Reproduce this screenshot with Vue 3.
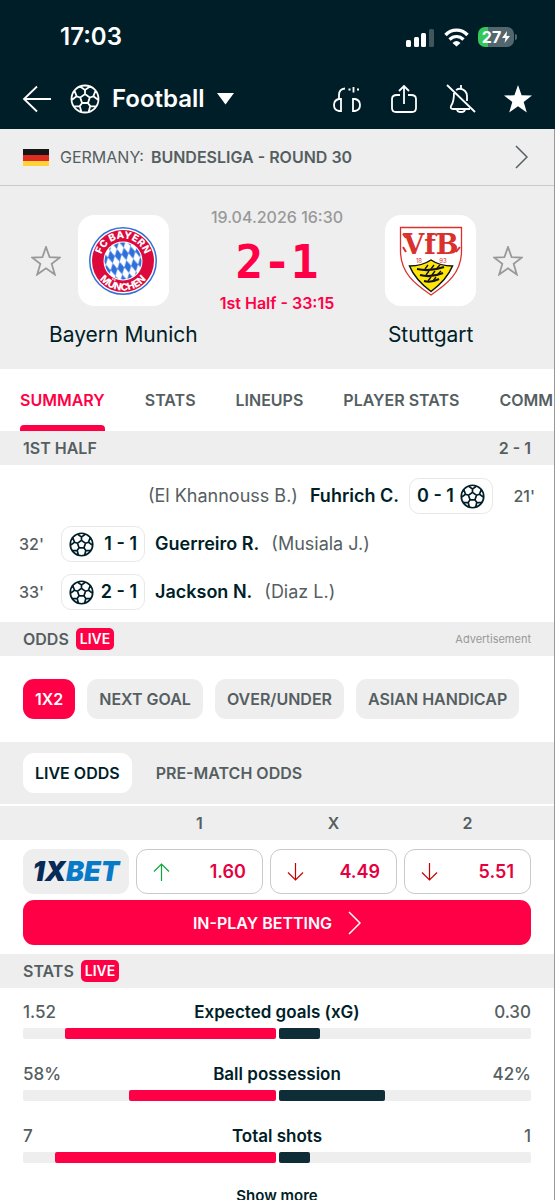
<template>
  <div class="screen">
    <header class="top">
      <div class="status-bar">
        <time class="clock">17:03</time>
        <div class="indicators">
          <svg class="signal" viewBox="0 0 29 19" fill="#fff">
            <rect x="0" y="12" width="5" height="7" rx="1.5" />
            <rect x="8" y="9" width="5" height="10" rx="1.5" />
            <rect x="15" y="5" width="5" height="14" rx="1.5" />
            <rect x="23" y="1" width="5" height="18" rx="1.5" fill="#40555c" />
          </svg>
          <svg class="wifi" viewBox="0 0 25 19" fill="none" stroke="#fff">
            <path d="M1.5 7 C7.5 .5 17.5 .5 23.5 7" stroke-width="3.4" />
            <path d="M5.5 11.5 C9.5 7.5 15.5 7.5 19.5 11.5" stroke-width="3.2" />
            <path d="M8.5 15 Q12.5 11 16.5 15 L12.5 18.5 Z" fill="#fff" stroke="none" />
          </svg>
          <div class="battery">
            <span>27</span>
            <svg viewBox="0 0 8 12" fill="#fff"><path d="M5 0 L0 7 H3.5 L2.5 12 L8 5 H4.5 Z" /></svg>
          </div>
        </div>
      </div>
      <nav class="nav-bar">
        <button type="button" class="icon-button back" aria-label="Back">
          <svg viewBox="0 0 30 28" fill="none" stroke="#fff" stroke-width="1.8">
            <path d="M29 14 H2 M15 1.5 L2 14 L15 26.5" />
          </svg>
        </button>
        <button type="button" class="sport">
          <svg class="ball" viewBox="0 0 30 30"><path :d="ballPath" /></svg>
          <span>Football</span>
          <svg class="caret" viewBox="0 0 17 12" fill="#fff"><path d="M0 0 H17 L8.5 11.5 Z" /></svg>
        </button>
        <div class="tools">
          <button type="button" class="icon-button" aria-label="Audio">
            <svg viewBox="0 0 30 30" fill="none" stroke="#fff" stroke-width="1.8">
              <path d="M9 15 H7 Q2 16 2 21 Q2 26 7 27 H9 Z M21 15 H23 Q28 16 28 21 Q28 26 23 27 H21 Z" />
              <path d="M7 15 V11 Q7 5 13 4.500" />
              <path d="M16.500 5.500 h2 M21.500 3 V8.500 M25 5.500 h2" />
            </svg>
          </button>
          <button type="button" class="icon-button" aria-label="Share">
            <svg viewBox="0 0 30 30" fill="none" stroke="#fff" stroke-width="1.8">
              <path d="M11 11 H8 Q3 11 3 15 V24 Q3 28 7 28 H23 Q27 28 27 24 V15 Q27 11 22 11 H19" />
              <path d="M15 20 V2 M10 7 L15 2 L20 7" />
            </svg>
          </button>
          <button type="button" class="icon-button" aria-label="Notifications off">
            <svg viewBox="0 0 30 30" fill="none" stroke="#fff" stroke-width="1.8">
              <path d="M1 1 L29 28 M15 1 V5" />
              <path d="M10 6 Q15 3 19 7 Q21 9 21 12 V17 M8 9 Q8 18 5 22 Q4 25 7 25 H24 M11 25 Q11 28 15 28 Q19 28 19 25" />
            </svg>
          </button>
          <button type="button" class="icon-button" aria-label="Favourite">
            <svg viewBox="0 0 30 30" fill="#fff"><path :d="starPath" /></svg>
          </button>
        </div>
      </nav>
    </header>

    <main class="content">
      <a href="#" class="league">
        <svg class="flag" viewBox="0 0 26 17">
          <path fill="#151515" d="M0 0h26v6H0z" />
          <path fill="#dd2c20" d="M0 6h26v6H0z" />
          <path fill="#ffd13b" d="M0 12h26v5H0z" />
        </svg>
        <span>GERMANY:</span>
        <b>BUNDESLIGA - ROUND 30</b>
        <svg class="chevron" viewBox="0 0 13 24"><path d="M1 1 L12 12 L1 23" /></svg>
      </a>

      <section class="match">
        <div class="team">
          <button type="button" class="star" aria-label="Follow Bayern Munich">
            <svg viewBox="0 0 30 30"><path :d="starPath" /></svg>
          </button>
          <div class="crest">
            <svg viewBox="0 0 70 70">
              <defs>
                <pattern id="lozenge" width="7" height="13" patternUnits="userSpaceOnUse" patternTransform="translate(35 35) rotate(-12)">
                  <path d="M3.5 0 L7 6.5 L3.5 13 L0 6.5 Z" fill="#2d70dc" />
                </pattern>
                <path id="arc-top" d="M12.5 35 A22.5 22.5 0 0 1 57.5 35" />
                <path id="arc-bottom" d="M5.5 35 A29.5 29.5 0 0 0 64.5 35" />
              </defs>
              <circle cx="35" cy="35" r="34" fill="#2f70d8" />
              <circle cx="35" cy="35" r="32.5" fill="#fff" />
              <circle cx="35" cy="35" r="31" fill="#dc0a3c" />
              <circle cx="35" cy="35" r="19.5" fill="#fff" />
              <circle cx="35" cy="35" r="18.5" fill="url(#lozenge)" />
              <g class="crest-text">
                <text><textPath href="#arc-top" startOffset="50%">FC BAYERN</textPath></text>
                <text><textPath href="#arc-bottom" startOffset="50%">MÜNCHEN</textPath></text>
              </g>
            </svg>
          </div>
          <span class="team-name">Bayern Munich</span>
        </div>

        <div class="result">
          <time>19.04.2026 16:30</time>
          <strong class="score">2-1</strong>
          <span class="period">1st Half - 33:15</span>
        </div>

        <div class="team away">
          <div class="crest">
            <svg viewBox="0 0 70 70">
              <path d="M4.5 1.5 H65.5 V25 C65.5 47 51 58 35 69 C19 58 4.500 47 4.500 25 Z" fill="#fff" stroke="#d9312b" stroke-width="1.3" />
              <text x="35" y="28" class="vfb">VfB</text>
              <path d="M10 26 l-3 -5 M10 12 l-3 -4 M60 26 l4 -5 M31 8 h7" stroke="#d9312b" stroke-width="2" />
              <text x="23" y="37" class="year">18</text>
              <text x="47" y="37" class="year">93</text>
              <path d="M13.5 40 Q26 40 35 34 Q44 40 56.5 40 C52 51 45 58 35 65.5 C25 58 18 51 13.5 40 Z" fill="#ffe60a" stroke="#111" stroke-width="1.5" />
              <g fill="none" stroke="#111" stroke-width="2">
                <path d="M21 43 Q34 46 48 41 M24 49 Q35 52 47 47 M28 55 Q35 57 43 53" />
                <path d="M29 43 l3 -4 M35 43 l3 -4 M41 42 l3 -3 M30 49 l3 -4 M36 49 l3 -4 M42 48 l3 -3 M32 55 l3 -4 M37 55 l3 -4" stroke-width="1.4" />
              </g>
            </svg>
          </div>
          <button type="button" class="star" aria-label="Follow Stuttgart">
            <svg viewBox="0 0 30 30"><path :d="starPath" /></svg>
          </button>
          <span class="team-name">Stuttgart</span>
        </div>
      </section>

      <nav class="tabs">
        <a v-for="tab in tabs" :key="tab" href="#" :class="{ active: tab === activeTab }" @click.prevent="activeTab = tab">{{ tab }}</a>
      </nav>

      <h2 class="section-head">
        <span>1ST HALF</span>
        <span class="push">2 - 1</span>
      </h2>
      <ul class="incidents">
        <li v-for="goal in goals" :key="goal.minute" :class="{ away: goal.away }">
          <span class="minute">{{ goal.minute }}'</span>
          <span class="goal">
            <svg class="ball" viewBox="0 0 30 30"><path :d="ballPath" /></svg>
            <span>{{ goal.score }}</span>
          </span>
          <b>{{ goal.player }}</b>
          <span class="assist">({{ goal.assist }})</span>
        </li>
      </ul>

      <h2 class="section-head">
        <span>ODDS</span>
        <span class="live">LIVE</span>
        <small class="push">Advertisement</small>
      </h2>
      <div class="markets">
        <button
          v-for="market in markets"
          :key="market"
          type="button"
          :class="{ active: market === activeMarket }"
          @click="activeMarket = market"
        >
          {{ market }}
        </button>
      </div>
      <div class="odds-tabs">
        <button
          v-for="name in oddsTabs"
          :key="name"
          type="button"
          :class="{ active: name === activeOdds }"
          @click="activeOdds = name"
        >
          {{ name }}
        </button>
      </div>
      <div class="odds-grid odds-head">
        <span></span>
        <span v-for="odd in odds" :key="odd.label">{{ odd.label }}</span>
      </div>
      <div class="odds-grid odds-row">
        <a href="#" class="bookmaker"><span>1X</span>BET</a>
        <button v-for="odd in odds" :key="odd.label" type="button" class="odd">
          <svg :class="odd.trend" viewBox="0 0 17 18"><path d="M8.5 18 V1 M1 8.5 L8.5 1 L16 8.5" /></svg>
          <span>{{ odd.value }}</span>
        </button>
      </div>
      <div class="bet-wrap">
        <button type="button" class="bet">
          <span>IN-PLAY BETTING</span>
          <svg class="chevron" viewBox="0 0 13 24"><path d="M1 1 L12 12 L1 23" /></svg>
        </button>
      </div>

      <h2 class="section-head">
        <span>STATS</span>
        <span class="live">LIVE</span>
      </h2>
      <div class="stats">
        <div v-for="stat in stats" :key="stat.name" class="stat">
          <div class="stat-text">
            <span>{{ stat.home }}</span>
            <b>{{ stat.name }}</b>
            <span>{{ stat.away }}</span>
          </div>
          <div class="bars">
            <div class="bar home"><i :style="{ width: stat.share + '%' }"></i></div>
            <div class="bar"><i :style="{ width: 100 - stat.share + '%' }"></i></div>
          </div>
        </div>
        <button type="button" class="more">Show more</button>
      </div>
    </main>
  </div>
</template>

<script setup>
import { ref } from 'vue';

const ballPath =
  'M15 1.5 A13.5 13.5 0 1 1 15 28.5 A13.5 13.5 0 1 1 15 1.5 Z ' +
  'M15 10 L19.8 13.5 L17.9 19 H12.1 L10.2 13.5 Z ' +
  'M15 10 V6 M19.8 13.5 L23.4 12.3 M17.9 19 L20.2 22.1 M12.1 19 L9.8 22.1 M10.2 13.5 L6.6 12.3 ' +
  'M10 2.5 L15 6 L20 2.5 M25.5 6.8 L23.4 12.3 L28.3 16 M26 22.4 L20.2 22.1 L18.7 27.8 ' +
  'M11.3 27.8 L9.8 22.1 L4 22.4 M1.7 16 L6.6 12.3 L4.5 6.8';
const starPath =
  'M15 1 L18.6 11.2 L29 11.5 L20.7 17.9 L23.8 28.5 L15 22.3 L6.2 28.5 L9.3 17.9 L1 11.5 L11.4 11.2 Z';

const tabs = ['SUMMARY', 'STATS', 'LINEUPS', 'PLAYER STATS', 'COMM'];
const activeTab = ref('SUMMARY');

const goals = [
  { minute: 21, score: '0 - 1', player: 'Fuhrich C.', assist: 'El Khannouss B.', away: true },
  { minute: 32, score: '1 - 1', player: 'Guerreiro R.', assist: 'Musiala J.' },
  { minute: 33, score: '2 - 1', player: 'Jackson N.', assist: 'Diaz L.' }
];

const markets = ['1X2', 'NEXT GOAL', 'OVER/UNDER', 'ASIAN HANDICAP'];
const activeMarket = ref('1X2');

const oddsTabs = ['LIVE ODDS', 'PRE-MATCH ODDS'];
const activeOdds = ref('LIVE ODDS');

const odds = [
  { label: '1', value: '1.60', trend: 'up' },
  { label: 'X', value: '4.49', trend: 'down' },
  { label: '2', value: '5.51', trend: 'down' }
];

const stats = [
  { name: 'Expected goals (xG)', home: '1.52', away: '0.30', share: 83.5 },
  { name: 'Ball possession', home: '58%', away: '42%', share: 58 },
  { name: 'Total shots', home: '7', away: '1', share: 87.5 }
];
</script>

<style>
body {
  margin: 0;
}
</style>

<style scoped>
.screen {
  height: 100vh;
  overflow: hidden;
  background: #fff;
  color: #001e28;
  font-family: Inter, "Liberation Sans", sans-serif;
  font-size: 16px;
  line-height: 20px;
}

.screen * {
  box-sizing: border-box;
}

svg {
  display: block;
  flex: none;
}

a {
  color: inherit;
  text-decoration: none;
}

button {
  background: none;
  border: none;
  color: inherit;
  cursor: pointer;
  font: inherit;
  padding: 0;
}

b {
  font-weight: 600;
}

.top {
  background: #001e28;
  color: #fff;
}

.status-bar {
  display: flex;
  align-items: center;
  justify-content: space-between;
  height: 68px;
  padding: 6px 38px 0 60px;
}

.clock {
  font-size: 24px;
  font-weight: 600;
}

.indicators {
  display: flex;
  align-items: center;
  gap: 9px;
}

.signal {
  width: 29px;
  height: 19px;
}

.wifi {
  width: 25px;
  height: 19px;
}

.battery {
  display: flex;
  align-items: center;
  justify-content: center;
  gap: 1px;
  position: relative;
  width: 36px;
  height: 20px;
  margin-right: 3px;
  border-radius: 7px;
  background: linear-gradient(90deg, #34c759 10px, #52666d 10px);
  font-size: 16px;
  font-weight: 700;
}

.battery::after {
  content: "";
  position: absolute;
  top: 7px;
  right: -3px;
  width: 2px;
  height: 6px;
  border-radius: 0 2px 2px 0;
  background: #52666d;
}

.battery svg {
  width: 8px;
  height: 12px;
}

.nav-bar {
  display: flex;
  align-items: center;
  height: 61px;
  padding: 0 22px;
}

.icon-button svg {
  width: 30px;
  height: 30px;
}

.back svg {
  height: 28px;
}

.sport {
  display: flex;
  align-items: center;
  gap: 12px;
  margin-left: 18px;
  font-size: 24px;
  font-weight: 600;
}

.ball {
  width: 30px;
  height: 30px;
  fill: none;
  stroke: currentColor;
  stroke-width: 1.8;
}

.caret {
  width: 17px;
  height: 12px;
}

.tools {
  display: flex;
  gap: 27px;
  margin-left: auto;
}

.content {
  border-right: 1px solid #999;
}

.league {
  display: flex;
  align-items: center;
  gap: 7px;
  height: 57px;
  padding: 0 26px 0 23px;
  background: #eee;
  border-bottom: 1px solid #c8cacb;
  color: #555e61;
}

.flag {
  width: 26px;
  height: 17px;
  margin-right: 4px;
}

.chevron {
  width: 13px;
  height: 24px;
  fill: none;
  stroke: currentColor;
  stroke-width: 1.5;
}

.league .chevron {
  margin-left: auto;
}

.match {
  display: grid;
  grid-template-columns: 3fr 2fr 3fr;
  padding: 29px 0 20px;
  background: #eee;
}

.team {
  display: grid;
  grid-template-columns: 2fr 91px 1fr;
  grid-template-rows: 91px 43px;
  align-items: center;
}

.team.away {
  grid-template-columns: 1fr 91px 2fr;
}

.crest {
  display: flex;
  align-items: center;
  justify-content: center;
  grid-column: 2;
  height: 91px;
  border-radius: 16px;
  background: #fff;
}

.crest svg {
  width: 70px;
  height: 70px;
}

.crest-text {
  fill: #fff;
  font-size: 10px;
  font-weight: 800;
  text-anchor: middle;
}

.vfb {
  fill: #d9312b;
  font-family: "DejaVu Serif", serif;
  font-size: 27px;
  font-weight: 700;
  text-anchor: middle;
}

.year {
  fill: #d9312b;
  font-size: 6px;
  text-anchor: middle;
}

.star {
  justify-self: end;
  padding-right: 17px;
}

.away .star {
  justify-self: start;
  padding: 0 0 0 17px;
}

.star svg {
  width: 30px;
  height: 30px;
  fill: none;
  stroke: #999;
  stroke-width: 1.8;
}

.team-name {
  grid-column: 2;
  justify-self: center;
  align-self: end;
  font-size: 21px;
  line-height: 28px;
  white-space: nowrap;
}

.result {
  display: flex;
  flex-direction: column;
  align-items: center;
  margin-top: -9px;
  white-space: nowrap;
}

.result time {
  color: #999;
  font-weight: 500;
  line-height: 22px;
}

.score {
  color: #ff0046;
  font-family: "DejaVu Sans Mono", monospace;
  font-size: 46px;
  line-height: 68px;
}

.period {
  color: #ff0046;
  font-weight: 600;
  line-height: 14px;
}

.tabs {
  display: flex;
  gap: 40px;
  height: 62px;
  padding: 0 0 0 20px;
  overflow: hidden;
  color: #555e61;
  font-weight: 600;
  line-height: 62px;
  white-space: nowrap;
}

.tabs .active {
  position: relative;
  color: #ff0046;
}

.tabs .active::after {
  content: "";
  position: absolute;
  right: 0;
  bottom: 0;
  left: 0;
  height: 6px;
  border-radius: 4px 4px 0 0;
  background: #ff0046;
}

.section-head {
  display: flex;
  align-items: center;
  gap: 7px;
  height: 34px;
  margin: 0;
  padding: 0 23px;
  background: #eee;
  color: #555e61;
  font-size: 16px;
  font-weight: 600;
}

.push {
  margin-left: auto;
}

small {
  color: #999;
  font-size: 11px;
  font-weight: 400;
}

.live {
  padding: 1px 4px;
  border-radius: 5px;
  background: #ff0046;
  color: #fff;
  font-size: 14px;
}

.incidents {
  display: flex;
  flex-direction: column;
  margin: 0;
  padding: 7px 19px 6px;
  list-style: none;
}

.incidents li {
  display: flex;
  align-items: center;
  height: 48px;
  font-size: 18px;
}

.incidents .away {
  flex-direction: row-reverse;
}

.minute {
  width: 42px;
  color: #555e61;
  font-size: 16px;
  font-weight: 500;
}

.away .minute {
  text-align: right;
}

.goal {
  display: flex;
  align-items: center;
  justify-content: space-between;
  width: 84px;
  height: 36px;
  margin-right: 10px;
  padding: 0 7px;
  border: 1px solid #e8e8e8;
  border-radius: 10px;
  font-weight: 600;
}

.away .goal {
  flex-direction: row-reverse;
  margin: 0 0 0 10px;
}

.goal .ball {
  width: 25px;
  height: 25px;
  stroke-width: 2;
}

.assist {
  margin: 0 12px;
  color: #555e61;
}

.markets {
  display: flex;
  gap: 12px;
  padding: 23px 23px 23px;
}

.markets button,
.odds-tabs button {
  height: 40px;
  padding: 0 12px;
  border-radius: 11px;
  color: #555e61;
  font-weight: 600;
  white-space: nowrap;
}

.markets button {
  background: #eee;
}

.markets .active {
  background: #ff0046;
  color: #fff;
}

.odds-tabs {
  display: flex;
  gap: 12px;
  padding: 11px 23px 11px;
  background: #eee;
  border-bottom: 2px solid #fff;
}

.odds-tabs .active {
  background: #fff;
  color: #001e28;
}

.odds-grid {
  display: grid;
  grid-template-columns: 106px 1fr 1fr 1fr;
  gap: 7px;
  padding: 0 23px;
}

.odds-head {
  background: #eee;
  color: #555e61;
  font-weight: 600;
  line-height: 34px;
  text-align: center;
}

.odds-row {
  padding-top: 9px;
}

.bookmaker {
  display: flex;
  align-items: center;
  justify-content: center;
  height: 45px;
  border-radius: 11px;
  background: #eee;
  color: #087bc8;
  font-size: 27px;
  font-style: italic;
  font-weight: 900;
}

.bookmaker span {
  color: #062b59;
}

.odd {
  display: flex;
  align-items: center;
  justify-content: space-between;
  height: 45px;
  padding: 0 16px;
  border: 1px solid #c8cacb;
  border-radius: 11px;
  color: #e5003f;
  font-size: 18px;
  font-weight: 600;
}

.odd svg {
  width: 17px;
  height: 18px;
  fill: none;
  stroke-width: 1.2;
}

.up {
  stroke: #0da83b;
}

.down {
  stroke: #c80000;
  transform: rotate(180deg);
}

.bet-wrap {
  padding: 6px 23px 9px;
}

.bet {
  display: flex;
  align-items: center;
  justify-content: center;
  gap: 16px;
  width: 100%;
  height: 45px;
  border-radius: 11px;
  background: #ff0046;
  color: #fff;
  font-weight: 600;
}

.stats {
  padding: 12px 23px 0;
}

.stat-text {
  display: grid;
  grid-template-columns: 1fr auto 1fr;
  margin-bottom: 4px;
  font-size: 17px;
  line-height: 24px;
}

.stat-text span {
  color: #555e61;
  font-weight: 500;
}

.stat-text span:last-child {
  text-align: right;
}

.bars {
  display: grid;
  grid-template-columns: 1fr 1fr;
  gap: 3px;
  margin-bottom: 23px;
}

.bar {
  display: flex;
  height: 11px;
  border-radius: 2px;
  background: #eee;
}

.bar i {
  border-radius: 2px;
  background: #0f2d37;
}

.bar.home {
  justify-content: flex-end;
}

.home i {
  background: #ff0046;
}

.more {
  display: block;
  margin: 0 auto;
  font-size: 15px;
  font-weight: 600;
  line-height: 20px;
}
</style>
